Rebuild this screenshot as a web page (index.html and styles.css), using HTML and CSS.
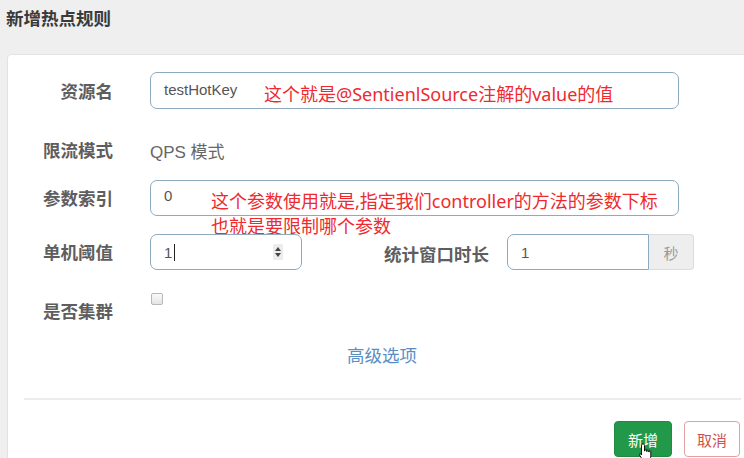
FILE: index.html
```html
<!DOCTYPE html>
<html lang="zh-CN">
<head>
<meta charset="utf-8">
<title>新增热点规则</title>
<link rel="stylesheet" href="styles.css">
</head>
<body>
<div class="page">
  <h1 class="title">新增热点规则</h1>
  <div class="card">
    <div class="form">
      <div class="row r1">
        <div class="lbl">资源名</div>
        <div class="ctl wide">
          <div class="input">testHotKey</div>
          <span class="note n1">这个就是@SentienlSource注解的value的值</span>
        </div>
      </div>
      <div class="row r2">
        <div class="lbl">限流模式</div>
        <div class="static">QPS 模式</div>
      </div>
      <div class="row r3">
        <div class="lbl">参数索引</div>
        <div class="ctl wide">
          <div class="input">0</div>
          <span class="note n3">这个参数使用就是,指定我们controller的方法的参数下标<br>也就是要限制哪个参数</span>
        </div>
      </div>
      <div class="row r4">
        <div class="lbl">单机阈值</div>
        <div class="ctl narrow">
          <div class="input num">1<span class="caret"></span>
            <svg class="spin" width="10" height="16" viewBox="0 0 10 16"><rect x="0" y="0" width="10" height="16" rx="1.5" fill="#ececec"/><path d="M2 7 L5 3 L8 7 Z M2 9 L5 13 L8 9 Z" fill="#444"/></svg>
          </div>
        </div>
        <div class="lbl2">统计窗口时长</div>
        <div class="group">
          <div class="input gi">1</div>
          <div class="addon">秒</div>
        </div>
      </div>
      <div class="row r5">
        <div class="lbl">是否集群</div>
        <div class="chk"></div>
      </div>
    </div>
    <div class="adv"><a class="link">高级选项</a></div>
    <div class="sep"></div>
    <div class="footer">
      <button class="btn ok">新增</button>
      <button class="btn cancel">取消</button>
      <svg class="hand" width="16" height="20" viewBox="0 0 16 20"><path d="M5 1 C6 1 6.5 1.6 6.5 2.5 V8 H7 V6.8 C7 6 8.7 6 8.7 6.8 V8.5 H9.1 V7.5 C9.1 6.7 10.8 6.7 10.8 7.5 V9 H11.2 V8.3 C11.2 7.5 12.8 7.5 12.8 8.3 V13 C12.8 15 11.8 18 9.8 18 H7 C5.5 18 4.7 17 4 16 L1.5 12 C1 11.2 2 10.2 2.8 11 L3.5 12 V2.5 C3.5 1.6 4 1 5 1 Z" fill="#fff" stroke="#111" stroke-width="1"/></svg>
    </div>
  </div>
</div>
</body>
</html>
```

FILE: styles.css
```css
html, body {
  margin: 0;
  padding: 0;
}
body {
  background: #efefef;
  width: 744px;
  height: 458px;
  overflow: hidden;
  font-family: "Noto Sans CJK SC", "Noto Sans", sans-serif;
}
.page {
  position: relative;
}
.title {
  margin: 0;
  padding-left: 6px;
  height: 36px;
  line-height: 36px;
  font-size: 17.5px;
  font-weight: 700;
  color: #3a3a3a;
}
.card {
  margin-top: 18px;
  margin-left: 7px;
  width: 750px;
  height: 420px;
  box-sizing: border-box;
  background: #fff;
  border: 1px solid #e2e2e2;
  border-radius: 4px;
  padding-top: 17px;
  position: relative;
}
.form {
  display: flex;
  flex-direction: column;
}
.row {
  display: flex;
  align-items: center;
  height: 36px;
  position: relative;
}
.r1 { height: 37px; }
.r2 { margin-top: 23px; }
.r3 { margin-top: 12px; }
.r4 { margin-top: 18px; }
.r5 { margin-top: 23px; align-items: flex-start; }
.lbl {
  width: 105px;
  text-align: right;
  margin-right: 37px;
  font-size: 17.5px;
  font-weight: 700;
  color: #5e5e5e;
  line-height: 36px;
  flex: none;
}
.lbl2 {
  margin-left: 82px;
  margin-right: 18px;
  font-size: 17.5px;
  font-weight: 700;
  color: #5e5e5e;
  line-height: 36px;
  position: relative;
  top: 2px;
}
.static {
  font-family: "Liberation Sans", "Noto Sans CJK SC", sans-serif;
  font-size: 17px;
  color: #666;
}
.ctl {
  position: relative;
  height: 100%;
}
.wide { width: 529px; }
.narrow { width: 152px; }
.input {
  box-sizing: border-box;
  height: 100%;
  border: 1px solid #8eaabf;
  border-radius: 7px;
  padding-left: 13px;
  display: flex;
  align-items: center;
  font-family: "Liberation Sans", "Noto Sans CJK SC", sans-serif;
  font-size: 15px;
  color: #555;
  background: #fff;
}
.r1 .input { padding-bottom: 3px; }
.r3 .input { padding-bottom: 6px; }
.num { position: relative; }
.caret {
  display: inline-block;
  width: 1px;
  height: 17px;
  background: #222;
  margin-left: 2px;
}
.spin {
  position: absolute;
  left: 122px;
  top: 9px;
}
.note {
  position: absolute;
  color: #ee2a2f;
  font-family: "Noto Sans", "Noto Sans CJK SC", sans-serif;
  font-size: 18px;
  line-height: 25px;
  white-space: nowrap;
}
.n1 { left: 114px; top: 10px; }
.n3 { left: 61px; top: 9px; }
.group {
  display: flex;
  height: 100%;
}
.gi {
  width: 142px;
  border-radius: 7px 0 0 7px;
}
.addon {
  box-sizing: border-box;
  width: 45px;
  height: 100%;
  background: #eee;
  border: 1px solid #dcdcdc;
  border-left: none;
  border-radius: 0 4px 4px 0;
  display: flex;
  align-items: center;
  justify-content: center;
  color: #999;
  font-size: 15px;
}
.chk {
  box-sizing: border-box;
  width: 12px;
  height: 12px;
  margin-left: 1px;
  border: 1px solid #b8b8b8;
  border-radius: 2px;
  background: linear-gradient(#fafafa, #e4e4e4);
}
.adv {
  margin-top: 8px;
  height: 36px;
  line-height: 36px;
  text-align: center;
}
.link {
  color: #5a8fc4;
  font-size: 17.5px;
}
.sep {
  margin: 25px 15px 0 16px;
  height: 2px;
  background: #ececec;
}
.footer {
  display: flex;
  justify-content: flex-end;
  gap: 12px;
  margin-top: 21px;
  padding-right: 16px;
  position: relative;
}
.btn {
  height: 36px;
  padding: 0;
  font-family: "Noto Sans CJK SC", sans-serif;
  font-size: 15px;
  border-radius: 4px;
  box-sizing: border-box;
  white-space: nowrap;
  text-align: center;
}
.ok {
  width: 58px;
  background: #22994a;
  border: 1px solid #1e8a42;
  color: #fff;
}
.cancel {
  width: 56px;
  background: #fff;
  border: 1px solid #e2a0a0;
  color: #d2504c;
}
.hand {
  position: absolute;
  left: 630px;
  top: 22px;
}
```
